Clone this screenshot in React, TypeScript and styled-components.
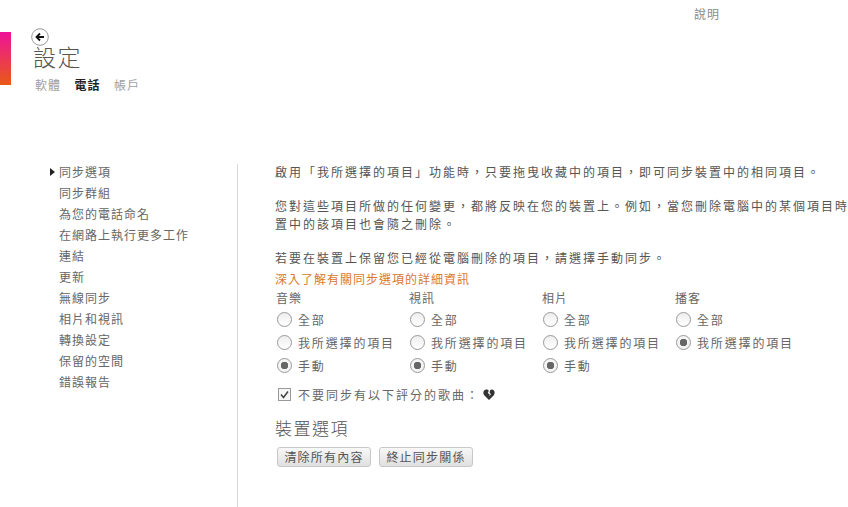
import styled, { createGlobalStyle } from "styled-components";

const GlobalStyle = createGlobalStyle`
  html, body {
    margin: 0;
    padding: 0;
    background: #fff;
    overflow: hidden;
  }
`;

const Page = styled.div`
  width: 848px;
  height: 507px;
  overflow: hidden;
  position: relative;
  font-family: "Noto Sans CJK TC", "Liberation Sans", sans-serif;
  font-size: 12px;
  color: #555;
`;

const HelpLink = styled.div`
  height: 28px;
  padding: 6px 128px 0 0;
  box-sizing: border-box;
  text-align: right;
  line-height: 16px;
  color: #8a8a8a;
  letter-spacing: 1px;
`;

const Accent = styled.div`
  position: absolute;
  left: 0;
  top: 32px;
  width: 11px;
  height: 53px;
  background: linear-gradient(180deg, #ef1299 0%, #e85a17 100%);
`;

const Header = styled.header`
  height: 136px;
  padding-left: 31px;
  display: flex;
  flex-direction: column;
`;

const BackIcon = styled.svg`
  display: block;
  width: 18px;
  height: 18px;
`;

const Title = styled.h1`
  margin: -5px 0 0 2px;
  font-size: 23px;
  font-weight: 300;
  line-height: 30px;
  letter-spacing: 1.5px;
  color: #555;
`;

const Tabs = styled.nav`
  display: flex;
  gap: 13.5px;
  margin: 6px 0 0 4px;
`;

const Tab = styled.span<{ $active?: boolean }>`
  line-height: 16px;
  letter-spacing: 1px;
  color: ${(p) => (p.$active ? "#222" : "#a0a0a0")};
  font-weight: ${(p) => (p.$active ? 700 : 400)};
`;

const Body = styled.div`
  display: flex;
`;

const Sidebar = styled.ul`
  list-style: none;
  margin: 0;
  padding: 0 0 0 50px;
  width: 187px;
  height: 343px;
  box-sizing: content-box;
  border-right: 1px solid #d8d8d8;
`;

const SideItem = styled.li<{ $active?: boolean }>`
  height: 21px;
  line-height: 16px;
  letter-spacing: 1px;
  color: #666;
  display: flex;
  align-items: flex-start;
  padding-left: 9px;
  position: relative;

  ${(p) =>
    p.$active &&
    `&::before {
      content: "";
      position: absolute;
      left: 0;
      top: 4px;
      border-left: 5px solid #222;
      border-top: 4px solid transparent;
      border-bottom: 4px solid transparent;
    }`}
`;

const Content = styled.main`
  margin-top: -1px;
  padding-left: 37px;
  flex: 1;
  min-width: 0;
`;

const Para = styled.div`
  line-height: 18px;
  letter-spacing: 2px;
  white-space: nowrap;
  color: #555;
  margin-bottom: 16px;
`;

const LearnMore = styled.div`
  margin-top: -13px;
  line-height: 17px;
  letter-spacing: 1px;
  color: #d9782f;
`;

const Columns = styled.div`
  display: flex;
  margin-top: 3px;
`;

const Column = styled.div`
  width: 133px;
  flex: none;
`;

const ColumnTitle = styled.div`
  height: 18px;
  padding-left: 1px;
  line-height: 16px;
  letter-spacing: 1px;
  color: #666;
`;

const RadioRow = styled.label`
  height: 23px;
  padding-left: 2px;
  display: flex;
  align-items: center;
  gap: 6px;
  letter-spacing: 1.85px;
  color: #666;
  white-space: nowrap;
`;

const RadioDot = styled.span<{ $on?: boolean }>`
  width: 13px;
  height: 13px;
  flex: none;
  border-radius: 50%;
  border: 1px solid #999;
  background: ${(p) =>
    p.$on
      ? "radial-gradient(circle, #666 0 3.5px, #f4f4f4 4px)"
      : "linear-gradient(180deg, #eee, #fff)"};
`;

const CheckRow = styled.label`
  display: flex;
  align-items: center;
  gap: 7px;
  margin: 7px 0 0 3px;
  height: 20px;
  letter-spacing: 2px;
  color: #666;
`;

const CheckIcon = styled.svg`
  width: 13px;
  height: 13px;
  flex: none;
`;

const HeartIcon = styled.svg`
  width: 12px;
  height: 11px;
  margin-left: -4px;
`;

const SectionTitle = styled.h2`
  margin: 12px 0 0;
  font-size: 17px;
  font-weight: 300;
  line-height: 24px;
  letter-spacing: 1.5px;
  color: #555;
`;

const Buttons = styled.div`
  display: flex;
  gap: 8px;
  margin: 7px 0 0 2px;
`;

const Button = styled.button`
  height: 20px;
  width: 94px;
  padding: 0;
  border: 1px solid #c8c8c8;
  border-radius: 3px;
  background: linear-gradient(180deg, #f8f8f8, #e0e0e0);
  font: inherit;
  line-height: 16px;
  letter-spacing: 1.2px;
  color: #555;
`;

const sideItems = [
  "同步選項",
  "同步群組",
  "為您的電話命名",
  "在網路上執行更多工作",
  "連結",
  "更新",
  "無線同步",
  "相片和視訊",
  "轉換設定",
  "保留的空間",
  "錯誤報告",
];

const columns = [
  { title: "音樂", options: ["全部", "我所選擇的項目", "手動"], on: 2 },
  { title: "視訊", options: ["全部", "我所選擇的項目", "手動"], on: 2 },
  { title: "相片", options: ["全部", "我所選擇的項目", "手動"], on: 2 },
  { title: "播客", options: ["全部", "我所選擇的項目"], on: 1 },
];

export default function App() {
  return (
    <Page>
      <GlobalStyle />
      <Accent />
      <HelpLink>說明</HelpLink>
      <Header>
        <BackIcon viewBox="0 0 18 18">
          <circle cx="9" cy="9" r="8.3" fill="#fff" stroke="#999" strokeWidth="1" />
          <path d="M13 9H6M9 5.5 5.5 9 9 12.5" fill="none" stroke="#111" strokeWidth="1.8" />
        </BackIcon>
        <Title>設定</Title>
        <Tabs>
          <Tab>軟體</Tab>
          <Tab $active>電話</Tab>
          <Tab>帳戶</Tab>
        </Tabs>
      </Header>
      <Body>
        <Sidebar>
          {sideItems.map((item, i) => (
            <SideItem key={item} $active={i === 0}>
              {item}
            </SideItem>
          ))}
        </Sidebar>
        <Content>
          <Para>啟用「我所選擇的項目」功能時，只要拖曳收藏中的項目，即可同步裝置中的相同項目。</Para>
          <Para>
            您對這些項目所做的任何變更，都將反映在您的裝置上。例如，當您刪除電腦中的某個項目時
            <br />
            置中的該項目也會隨之刪除。
          </Para>
          <Para>若要在裝置上保留您已經從電腦刪除的項目，請選擇手動同步。</Para>
          <LearnMore>深入了解有關同步選項的詳細資訊</LearnMore>
          <Columns>
            {columns.map((col) => (
              <Column key={col.title}>
                <ColumnTitle>{col.title}</ColumnTitle>
                {col.options.map((opt, i) => (
                  <RadioRow key={opt}>
                    <RadioDot $on={i === col.on} />
                    {opt}
                  </RadioRow>
                ))}
              </Column>
            ))}
          </Columns>
          <CheckRow>
            <CheckIcon viewBox="0 0 13 13">
              <rect x="0.5" y="0.5" width="12" height="12" fill="#f6f6f6" stroke="#999" />
              <path d="M3 6.5 5.5 9.5 10 3.5" fill="none" stroke="#444" strokeWidth="1.5" />
            </CheckIcon>
            不要同步有以下評分的歌曲：
            <HeartIcon viewBox="0 0 12 11">
              <path d="M6 11 1.2 6.2C-.6 4 .6.5 3.3.5 4.5.5 5.2 1 5.8 1.8L4.8 4 6.8 5.4 5.6 7.6 8 5.2 6.6 3.8 7 1.4C7.5.9 8.1.5 8.9.5c2.6 0 3.6 3.6 1.9 5.7z" fill="#333" />
            </HeartIcon>
          </CheckRow>
          <SectionTitle>裝置選項</SectionTitle>
          <Buttons>
            <Button>清除所有內容</Button>
            <Button>終止同步關係</Button>
          </Buttons>
        </Content>
      </Body>
    </Page>
  );
}
